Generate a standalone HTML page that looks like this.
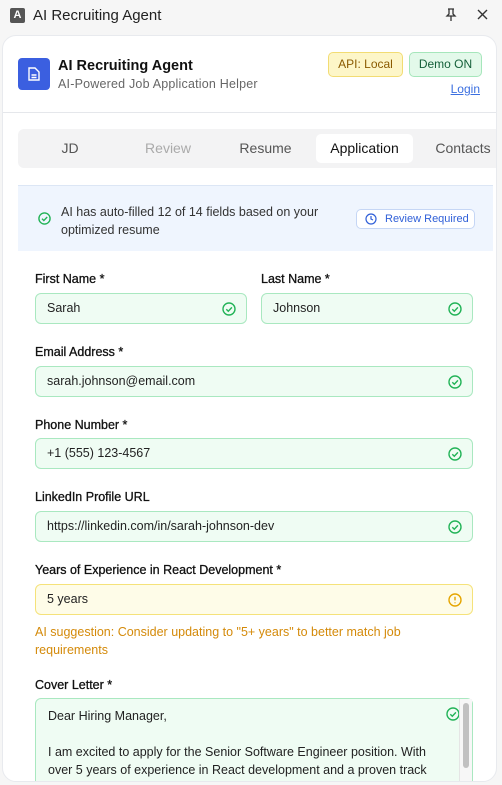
<!DOCTYPE html><html><head><style>
*{box-sizing:border-box;margin:0;padding:0}
body{width:502px;height:785px;overflow:hidden;background:#f6f6f6;font-family:"Liberation Sans",sans-serif;color:#111;position:relative}
.tb{position:absolute;top:0;left:0;width:502px;height:32px}
.tb .a{position:absolute;left:10px;top:8px;width:15px;height:15px;background:#555;color:#fff;font-size:11px;font-weight:bold;text-align:center;line-height:15px;border-radius:2px}
.tb .t{position:absolute;left:33px;top:7px;font-size:15px;color:#222}
.card{position:absolute;left:2px;top:35px;width:495px;height:747px;background:#fff;border:1px solid #e8eaee;border-radius:14px;overflow:hidden}
.hdr{position:absolute;left:0;top:0;width:100%;height:77px;border-bottom:1px solid #e5e7eb}
.logo{position:absolute;left:15px;top:22px;width:32px;height:32px;background:#3b5fe0;border-radius:4px}
.h1{position:absolute;left:55px;top:22px;font-size:14.5px;font-weight:bold}
.h2{position:absolute;left:55px;top:41px;font-size:12.5px;color:#666;letter-spacing:.2px}
.b{position:absolute;top:16px;height:25px;border-radius:5px;font-size:12px;line-height:23px;text-align:center}
.login{position:absolute;right:16px;top:46px;font-size:12px;color:#3b6fe0;text-decoration:underline}
.tabs{position:absolute;left:15px;top:93px;width:490px;height:39px;background:#f3f3f4;border-radius:6px}
.tab{position:absolute;top:5px;height:29px;line-height:29px;font-size:14px;color:#555;text-align:center}
.ban{position:absolute;left:15px;top:149px;width:475px;height:66px;background:#eff5fe;border-top:1px solid #dce6f5}
.lbl{position:absolute;font-size:12.5px;color:#111;-webkit-text-stroke:0.3px #111}
.in{position:absolute;height:31px;background:#effcf3;border:1px solid #a9e8c0;border-radius:6px;font-size:12.5px;line-height:29px;padding-left:11px;color:#222}
.in svg{position:absolute;right:10px;top:8px}
</style></head><body>
<div class="tb"><div class="a">A</div><div class="t">AI Recruiting Agent</div>
<svg style="position:absolute;left:445px;top:8px" width="12" height="14" viewBox="0 0 12 14" fill="none" stroke="#333" stroke-width="1.3"><path d="M3 1h6M4 1v5L2 8h8L8 6V1M6 8v5"/></svg>
<svg style="position:absolute;left:477px;top:9px" width="11" height="11" viewBox="0 0 11 11" stroke="#333" stroke-width="1.4"><path d="M1 1l9 9M10 1l-9 9"/></svg></div>
<div class="card">
<div class="hdr">
<div class="logo"><svg style="position:absolute;left:10px;top:9px" width="12" height="14" viewBox="0 0 12 14" fill="none" stroke="#fff" stroke-width="1.4"><path d="M1 1h6l4 4v8H1z M3.5 8h5M3.5 10.5h5"/></svg></div>
<div class="h1">AI Recruiting Agent</div><div class="h2">AI-Powered Job Application Helper</div>
<div class="b" style="left:325px;width:75px;background:#fdf6c8;border:1px solid #f2dc73;color:#8a5a00">API: Local</div>
<div class="b" style="left:406px;width:73px;background:#e3f9ea;border:1px solid #a6e6bb;color:#15603a">Demo ON</div>
<div class="login">Login</div></div>
<div class="tabs">
<div class="tab" style="left:22px;width:60px">JD</div>
<div class="tab" style="left:115px;width:70px;color:#aaa">Review</div>
<div class="tab" style="left:210px;width:75px">Resume</div>
<div class="tab" style="left:298px;width:97px;background:#fff;border-radius:5px;color:#111">Application</div>
<div class="tab" style="left:405px;width:80px">Contacts</div></div>
<div class="ban">
<svg style="position:absolute;left:20px;top:26px" width="13" height="13" viewBox="0 0 14 14" fill="none" stroke="#22b357" stroke-width="1.5"><circle cx="7" cy="7" r="6"/><path d="M4.3 7.2l2 2 3.6-3.8"/></svg>
<div style="position:absolute;left:43px;top:17px;font-size:12.5px;line-height:18px;color:#333">AI has auto-filled 12 of 14 fields based on your<br>optimized resume</div>
<div style="position:absolute;left:338px;top:23px;width:119px;height:20px;background:#fff;border:1px solid #c5d6f5;border-radius:5px;font-size:11px;line-height:18px;color:#2f5fd8;padding-left:28px">Review Required
<svg style="position:absolute;left:8px;top:3px" width="12" height="12" viewBox="0 0 12 12" fill="none" stroke="#2f5fd8" stroke-width="1.2"><circle cx="6" cy="6" r="5"/><path d="M6 3v3l2 1"/></svg></div></div>
<div class="lbl" style="left:32px;top:236px">First Name *</div><div class="lbl" style="left:258px;top:236px">Last Name *</div>
<div class="in" style="left:32px;top:257px;width:212px">Sarah<svg width="14" height="14" viewBox="0 0 14 14" fill="none" stroke="#22b357" stroke-width="1.4"><circle cx="7" cy="7" r="6"/><path d="M4.3 7.2l2 2 3.6-3.8"/></svg></div>
<div class="in" style="left:258px;top:257px;width:212px">Johnson<svg width="14" height="14" viewBox="0 0 14 14" fill="none" stroke="#22b357" stroke-width="1.4"><circle cx="7" cy="7" r="6"/><path d="M4.3 7.2l2 2 3.6-3.8"/></svg></div>
<div class="lbl" style="left:32px;top:309px">Email Address *</div>
<div class="in" style="left:32px;top:330px;width:438px">sarah.johnson@email.com<svg width="14" height="14" viewBox="0 0 14 14" fill="none" stroke="#22b357" stroke-width="1.4"><circle cx="7" cy="7" r="6"/><path d="M4.3 7.2l2 2 3.6-3.8"/></svg></div>
<div class="lbl" style="left:32px;top:382px">Phone Number *</div>
<div class="in" style="left:32px;top:402px;width:438px">+1 (555) 123-4567<svg width="14" height="14" viewBox="0 0 14 14" fill="none" stroke="#22b357" stroke-width="1.4"><circle cx="7" cy="7" r="6"/><path d="M4.3 7.2l2 2 3.6-3.8"/></svg></div>
<div class="lbl" style="left:32px;top:454px">LinkedIn Profile URL</div>
<div class="in" style="left:32px;top:475px;width:438px">https://linkedin.com/in/sarah-johnson-dev<svg width="14" height="14" viewBox="0 0 14 14" fill="none" stroke="#22b357" stroke-width="1.4"><circle cx="7" cy="7" r="6"/><path d="M4.3 7.2l2 2 3.6-3.8"/></svg></div>
<div class="lbl" style="left:32px;top:527px">Years of Experience in React Development *</div>
<div class="in" style="left:32px;top:548px;width:438px;background:#fefce8;border-color:#f5e27a">5 years<svg width="14" height="14" viewBox="0 0 14 14" fill="none" stroke="#e5a500" stroke-width="1.4"><circle cx="7" cy="7" r="6"/><path d="M7 3.8v3.6M7 9.4v.8"/></svg></div>
<div style="position:absolute;left:32px;top:587px;font-size:12.5px;line-height:18px;color:#d48a0a">AI suggestion: Consider updating to "5+ years" to better match job<br>requirements</div>
<div class="lbl" style="left:32px;top:642px">Cover Letter *</div>
<div style="position:absolute;left:32px;top:662px;width:438px;height:100px;background:#effcf3;border:1px solid #a9e8c0;border-radius:6px;font-size:12.5px;line-height:18px;color:#222;padding:8px 40px 8px 12px">Dear Hiring Manager,<br><br>I am excited to apply for the Senior Software Engineer position. With over 5 years of experience in React development and a proven track
<svg style="position:absolute;right:12px;top:8px" width="14" height="14" viewBox="0 0 14 14" fill="none" stroke="#22b357" stroke-width="1.4"><circle cx="7" cy="7" r="6"/><path d="M4.3 7.2l2 2 3.6-3.8"/></svg>
<div style="position:absolute;right:0;top:0;width:13px;height:100%;background:#f7f7f7;border-left:1px solid #e5e5e5"><div style="margin:4px 3px;width:6px;height:65px;background:#c1c1c1;border-radius:3px"></div></div></div>
</div></body></html>
